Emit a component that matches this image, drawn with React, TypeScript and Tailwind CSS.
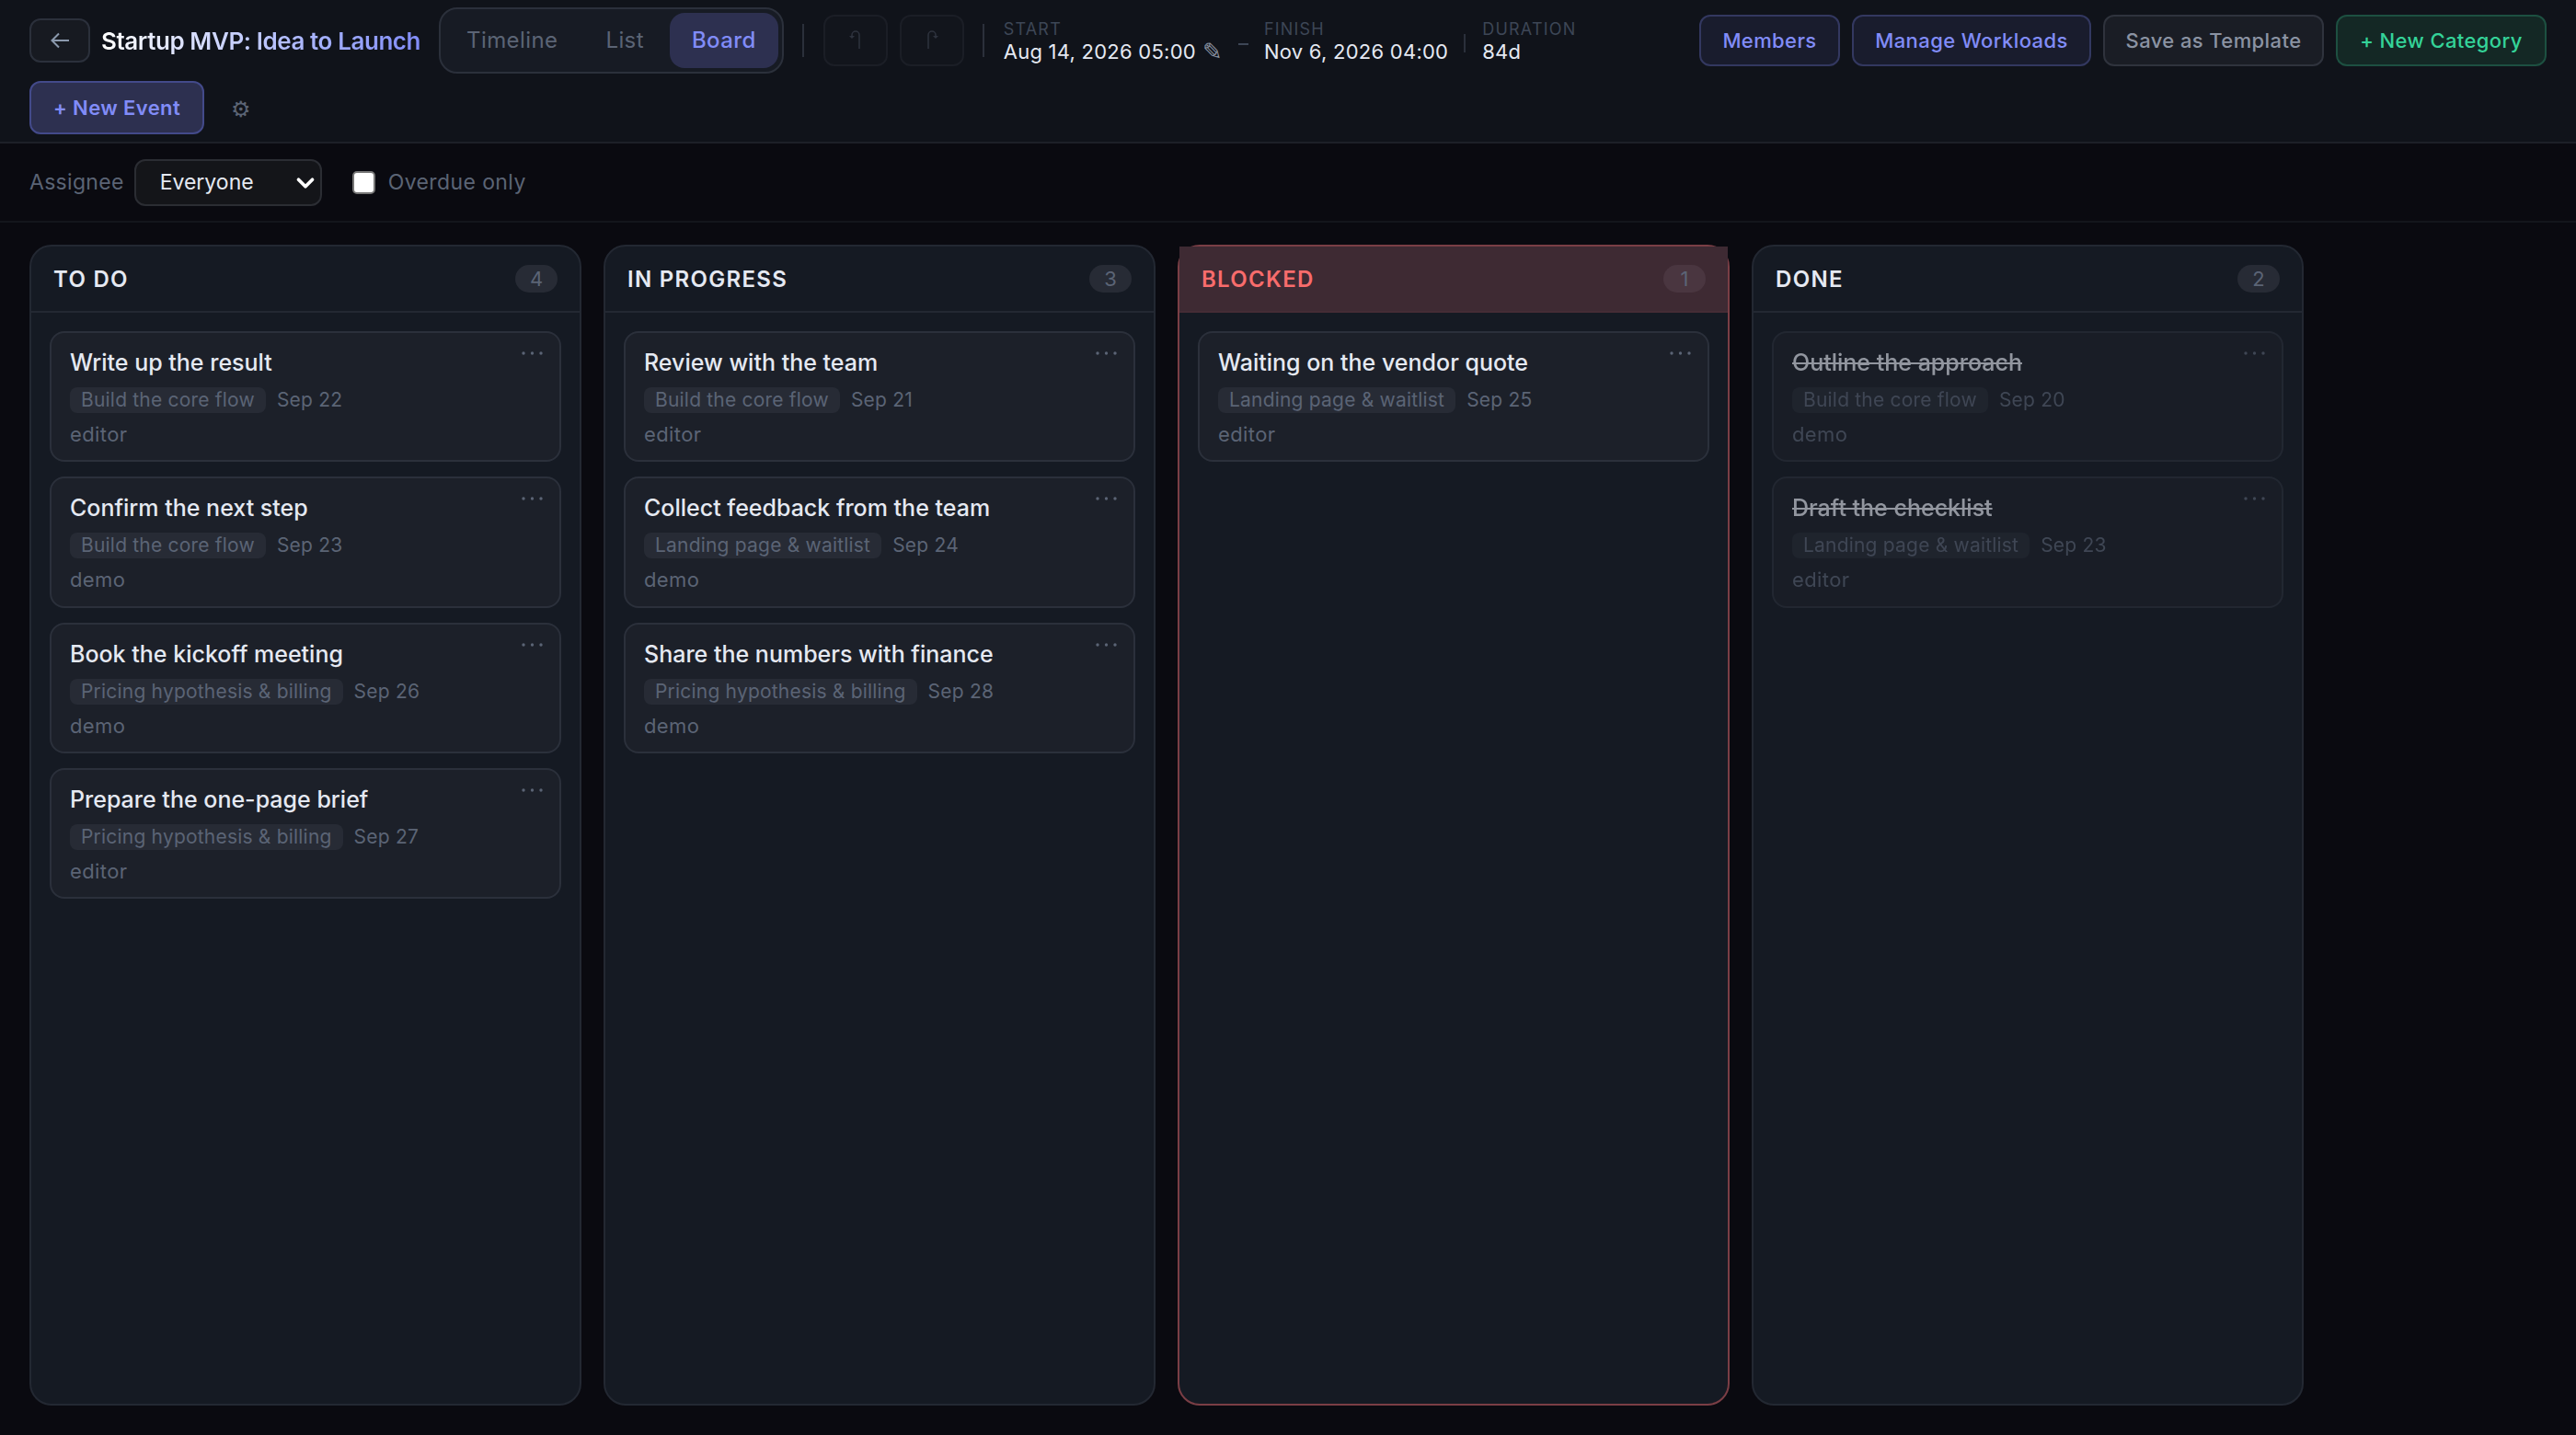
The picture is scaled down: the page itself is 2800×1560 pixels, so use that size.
import { ChevronDown } from 'lucide-react';

type Task = { title: string; tag: string; date: string; who: string };
type Column = { name: string; tasks: Task[] };

const CORE = 'Build the core flow';
const LANDING = 'Landing page & waitlist';
const PRICING = 'Pricing hypothesis & billing';

const columns: Column[] = [
  {
    name: 'TO DO',
    tasks: [
      { title: 'Write up the result', tag: CORE, date: 'Sep 22', who: 'editor' },
      { title: 'Confirm the next step', tag: CORE, date: 'Sep 23', who: 'demo' },
      { title: 'Book the kickoff meeting', tag: PRICING, date: 'Sep 26', who: 'demo' },
      { title: 'Prepare the one-page brief', tag: PRICING, date: 'Sep 27', who: 'editor' },
    ],
  },
  {
    name: 'IN PROGRESS',
    tasks: [
      { title: 'Review with the team', tag: CORE, date: 'Sep 21', who: 'editor' },
      { title: 'Collect feedback from the team', tag: LANDING, date: 'Sep 24', who: 'demo' },
      { title: 'Share the numbers with finance', tag: PRICING, date: 'Sep 28', who: 'demo' },
    ],
  },
  {
    name: 'BLOCKED',
    tasks: [{ title: 'Waiting on the vendor quote', tag: LANDING, date: 'Sep 25', who: 'editor' }],
  },
  {
    name: 'DONE',
    tasks: [
      { title: 'Outline the approach', tag: CORE, date: 'Sep 20', who: 'demo' },
      { title: 'Draft the checklist', tag: LANDING, date: 'Sep 23', who: 'editor' },
    ],
  },
];

function HookArrow({ flip }: { flip?: boolean }) {
  return (
    <svg viewBox="0 0 24 24" className={`h-[24px] w-[24px] ${flip ? '-scale-x-100' : ''}`} fill="none">
      <path d="M16 21V6A4 4 0 0 0 8 6V7" stroke="#2e333e" strokeWidth="1.5" />
      <path d="M5 7H11L8 10Z" fill="#2e333e" />
    </svg>
  );
}

function TaskCard({ task, done }: { task: Task; done: boolean }) {
  return (
    <div
      className={`relative h-[142.25px] rounded-[16px] border-2 border-[#2b303b] bg-[#1c2029] px-[20px] pt-[14px] ${
        done ? 'opacity-60' : ''
      }`}
    >
      <svg className="absolute right-[17px] top-[19px] h-[6px] w-[25px]" viewBox="0 0 25 6" fill="#5b6475">
        <circle cx="3" cy="3" r="1.7" />
        <circle cx="12.5" cy="3" r="1.7" />
        <circle cx="22" cy="3" r="1.7" />
      </svg>
      <div className={`text-[25px] leading-[36px] font-medium text-[#e5e9f2] ${done ? 'line-through' : ''}`}>
        {task.title}
      </div>
      <div className="mt-[9px] flex items-center gap-[12px] text-[21px] leading-[28px] tracking-[0.2px] text-[#5b6475]">
        <span className="rounded-[8px] bg-[#272b35] px-[12px]">{task.tag}</span>
        <span>{task.date}</span>
      </div>
      <div className="mt-[9px] text-[22px] leading-[28px] tracking-[0.4px] text-[#5b6475]">{task.who}</div>
    </div>
  );
}

function BoardColumn({ column }: { column: Column }) {
  const blocked = column.name === 'BLOCKED';
  const done = column.name === 'DONE';
  return (
    <div
      className={`flex w-[600px] flex-col rounded-[24px] border-2 bg-[#151a23] ${
        blocked ? 'border-[#7a3e45]' : 'border-[#232832]'
      }`}
    >
      <div
        className={`flex h-[72px] items-center justify-between border-b-2 pl-[24px] pr-[24px] ${
          blocked ? 'border-[#452c35] bg-[#3e2a33]' : 'border-[#232832]'
        }`}
      >
        <span
          className={`mt-[2px] text-[24px] font-semibold tracking-[1.3px] ${
            blocked ? 'text-[#f86c6c]' : 'text-[#e5e9f2]'
          }`}
        >
          {column.name}
        </span>
        <span
          className={`flex h-[30px] min-w-[46px] items-center justify-center rounded-full px-[14px] text-[22px] text-[#5b6475] ${
            blocked ? 'bg-[#4a3640]' : 'bg-[#272b35]'
          }`}
        >
          {column.tasks.length}
        </span>
      </div>
      <div className="flex flex-col gap-[16px] p-[20px]">
        {column.tasks.map((task) => (
          <TaskCard key={task.title} task={task} done={done} />
        ))}
      </div>
    </div>
  );
}

export default function App() {
  return (
    <div className="flex h-screen flex-col overflow-hidden bg-[#0a0a10] font-['Inter',sans-serif]">
      {/* Header */}
      <div className="flex h-[156px] flex-col gap-[8px] border-b-2 border-[#1d2028] bg-[#10131a] px-[32px] pt-[8px]">
        <div className="flex h-[72px] items-center">
          <button className="flex h-[48px] w-[66px] items-center justify-center rounded-[12px] border-2 border-[#2b303b] bg-[#171a21]">
            <svg viewBox="0 0 20 18" className="h-[18px] w-[20px]" fill="none" stroke="#8b99ad" strokeWidth="2">
              <path d="M20 9H2M9 1.5L1.5 9L9 16.5" />
            </svg>
          </button>
          <h1 className="ml-[12px] bg-gradient-to-r from-[#ffffff] to-[#818cf8] bg-clip-text text-[26px] font-semibold tracking-[-0.43px] text-transparent">
            Startup MVP: Idea to Launch
          </h1>
          <div className="ml-[20px] flex h-[72px] items-center gap-[4px] rounded-[20px] border-2 border-[#2b303b] bg-[#171b24] p-[4px] text-[24px] tracking-[0.4px] text-[#5b6475]">
            <span className="px-[24px]">Timeline</span>
            <span className="px-[24px]">List</span>
            <span className="flex h-[60px] items-center rounded-[16px] bg-[#2d3050] px-[24px] font-medium text-[#818cf8]">
              Board
            </span>
          </div>
          <div className="ml-[20px] h-[36px] w-[2px] bg-[#2b303b]" />
          <button className="ml-[21px] flex h-[56px] w-[70px] items-center justify-center rounded-[12px] border-2 border-[#1b1e26] bg-[#12151c]">
            <HookArrow />
          </button>
          <button className="ml-[13px] flex h-[56px] w-[70px] items-center justify-center rounded-[12px] border-2 border-[#1b1e26] bg-[#12151c]">
            <HookArrow flip />
          </button>
          <div className="ml-[20px] h-[36px] w-[2px] bg-[#2b303b]" />
          <div className="ml-[21px] mt-[4px] flex flex-col">
            <span className="text-[18px] leading-[20px] tracking-[1.2px] text-[#3d4656]">START</span>
            <span className="flex h-[28px] items-center text-[22px] leading-[28px] tracking-[0.25px] text-[#e5e9f2]">
              Aug 14, 2026 05:00
              <span className="ml-[7px] font-['DejaVu_Sans'] text-[26px] text-[#8b93a3]">✎</span>
            </span>
          </div>
          <div className="ml-[17px] mt-[8px] h-[2px] w-[11px] bg-[#3d4656]" />
          <div className="ml-[17px] mt-[4px] flex flex-col">
            <span className="text-[18px] leading-[20px] tracking-[1.2px] text-[#3d4656]">FINISH</span>
            <span className="text-[22px] leading-[28px] tracking-[0.25px] text-[#e5e9f2]">Nov 6, 2026 04:00</span>
          </div>
          <div className="ml-[17px] mt-[6px] h-[20px] w-[2px] bg-[#2b303b]" />
          <div className="ml-[18px] mt-[4px] flex flex-col">
            <span className="text-[18px] leading-[20px] tracking-[1.2px] text-[#3d4656]">DURATION</span>
            <span className="text-[22px] leading-[28px] tracking-[0.25px] text-[#e5e9f2]">84d</span>
          </div>
          <div className="ml-auto flex items-center gap-[13px] text-[22px] font-medium tracking-[0.4px]">
            <button className="h-[56px] w-[153px] rounded-[12px] border-2 border-[#333860] bg-[#191c2d] text-[#818cf8]">
              Members
            </button>
            <button className="h-[56px] w-[260px] rounded-[12px] border-2 border-[#333860] bg-[#191c2d] text-[#818cf8]">
              Manage Workloads
            </button>
            <button className="h-[56px] w-[240px] rounded-[12px] border-2 border-[#2f333d] bg-[#1a1d25] text-[#8b93a3]">
              Save as Template
            </button>
            <button className="h-[56px] w-[229px] rounded-[12px] border-2 border-[#1d5041] bg-[#142825] text-[#34d399]">
              + New Category
            </button>
          </div>
        </div>
        <div className="flex items-center">
          <button className="h-[58px] w-[190px] rounded-[12px] border-2 border-[#434a8a] bg-[#2d3050] text-[22px] font-semibold tracking-[0.4px] text-[#818cf8]">
            + New Event
          </button>
          <span className="ml-[29px] mt-[3px] text-[24px] leading-none text-[#5b6475]">⚙</span>
        </div>
      </div>

      {/* Filters */}
      <div className="flex h-[86px] items-center border-b-2 border-[#14161c] px-[32px] text-[23px]">
        <span className="tracking-[0.3px] text-[#5b6475]">Assignee</span>
        <div className="relative ml-[11px] h-[51px] w-[204px]">
          <select className="h-full w-full appearance-none rounded-[12px] border-2 border-[#2b2d33] bg-[#141519] pl-[26px] text-[23px] text-[#e5e9f2] outline-none">
            <option>Everyone</option>
          </select>
          <ChevronDown
            className="pointer-events-none absolute right-[3px] top-[11px] h-[30px] w-[30px] text-white"
            strokeWidth={3}
          />
        </div>
        <input
          type="checkbox"
          className="ml-[33px] h-[25px] w-[25px] appearance-none rounded-[5px] border-2 border-[#767676] bg-white"
        />
        <span className="ml-[14px] tracking-[0.4px] text-[#5b6475]">Overdue only</span>
      </div>

      {/* Board */}
      <div className="flex min-h-0 flex-1 gap-[24px] px-[32px] pb-[32px] pt-[24px]">
        {columns.map((column) => (
          <BoardColumn key={column.name} column={column} />
        ))}
      </div>
    </div>
  );
}
